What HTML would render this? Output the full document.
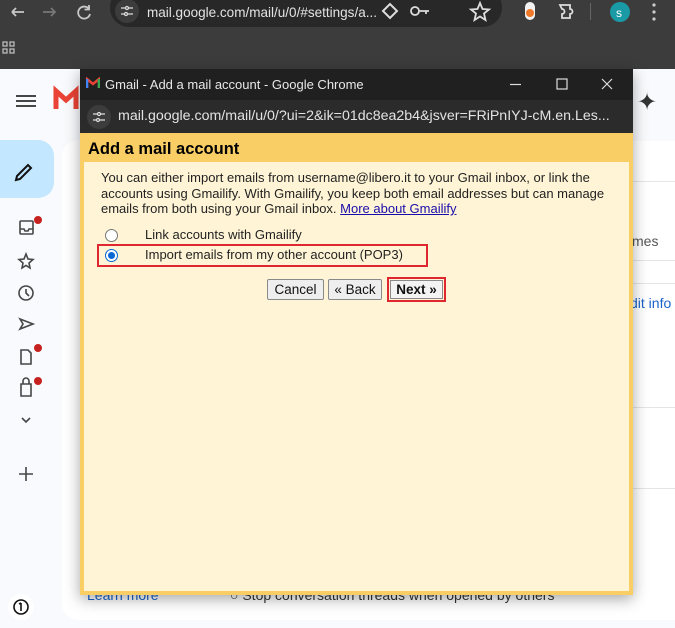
<!DOCTYPE html>
<html><head><style>
*{margin:0;padding:0;box-sizing:border-box}
body{width:675px;height:628px;overflow:hidden;background:#f8fafd;font-family:"Liberation Sans",Arial,sans-serif;position:relative}
.a{position:absolute}
</style></head><body>
<div class="a" style="left:0;top:0;width:675px;height:69px;background:#3c3c3c"></div>
<svg class="a" style="left:0;top:0" width="675" height="69">
 <g stroke="#c8c8c8" stroke-width="1.8" fill="none">
  <path d="M24 12 L12 12 M12 12 L16 8 M12 12 L16 16"/>
  <path d="M43 12 H55 M51 8 L55 12 L51 16" stroke="#777"/>
  <path d="M89 9 A6 6 0 1 0 90 14 M89 5 V9.5 H84.5"/>
 </g>
 <rect x="110" y="-12" width="392" height="39" rx="19" fill="#282828"/>
 <circle cx="127" cy="11" r="12" fill="#3c3c3c"/>
 <g stroke="#ddd" stroke-width="1.3" fill="none"><path d="M121 8 H126 M129 8 H133 M121 14 H125 M128 14 H133"/><circle cx="127" cy="8" r="1.5"/><circle cx="126" cy="14" r="1.5"/></g>
 <text x="147" y="17" fill="#e3e3e3" font-size="14" font-family="Liberation Sans" textLength="230" lengthAdjust="spacingAndGlyphs">mail.google.com/mail/u/0/#settings/a...</text>
 <path d="M383 11 L390 4 L397 11 L390 18Z" fill="none" stroke="#ddd" stroke-width="2"/>
 <g stroke="#ddd" stroke-width="1.8" fill="none"><circle cx="415" cy="11" r="4"/><path d="M419 11 H429 M426 11 V14"/>
 <path d="M480 3 L482.5 9 L489 9.5 L484 13.5 L485.5 20 L480 16.5 L474.5 20 L476 13.5 L471 9.5 L477.5 9Z"/>
 <path d="M560 5 H570 V9 A2 2 0 0 1 570 14 V18 H562 V14 A2 2 0 0 0 562 9 Z"/></g>
 <rect x="525" y="2" width="10" height="18" rx="5" fill="#f2f2f2"/><circle cx="530" cy="13" r="4" fill="#f07a2a"/>
 <rect x="590" y="3" width="1" height="17" fill="#666"/>
 <circle cx="620" cy="12" r="10" fill="#1a9aa5"/><text x="616" y="17" fill="#fff" font-size="12">s</text>
 <g fill="#ccc"><circle cx="654" cy="5" r="1.6"/><circle cx="654" cy="12" r="1.6"/><circle cx="654" cy="19" r="1.6"/></g>
 <g stroke="#bbb" stroke-width="1.3" fill="none"><rect x="3" y="42" width="4" height="4"/><rect x="10" y="42" width="4" height="4"/><rect x="3" y="49" width="4" height="4"/><rect x="10" y="49" width="4" height="4"/></g>
</svg>
<div class="a" style="left:62px;top:140px;width:640px;height:480px;background:#fff;border-radius:16px"></div>
<div class="a" style="left:0;top:140px;width:54px;height:58px;background:#c2e7ff;border-radius:0 16px 16px 0"></div>
<svg class="a" style="left:0;top:69px" width="80" height="559">
 <g stroke="#444746" stroke-width="2"><path d="M16 27 H36 M16 32 H36 M16 37 H36"/></g>
 <path d="M56 40 V22 L66 31 L76 22 V40" fill="none" stroke="#ea4335" stroke-width="5"/>
 <path d="M17 107 L28 96 L31 99 L20 110 L16 111Z" fill="none" stroke="#111" stroke-width="2"/>
 <g stroke="#444746" stroke-width="1.6" fill="none">
  <rect x="20" y="152" width="13" height="13" rx="1"/><path d="M20 160 H24 L25 162 H28 L29 160 H33"/>
  <path d="M26 185 L28 190 L33 190.5 L29 194 L30 199 L26 196.5 L22 199 L23 194 L19 190.5 L24 190Z"/>
  <circle cx="26" cy="224" r="7"/><path d="M26 220 V224 L29 227"/>
  <path d="M20 250 L33 255 L20 260 L23 255Z"/>
  <path d="M21 281 H28 L31 284 V295 H21Z"/>
  <path d="M21 315 H31 V327 H21Z M23 315 V312 A3 3 0 0 1 29 312 V315"/>
  <path d="M22 349 L26 353 L30 349"/>
  <path d="M26 398 V412 M19 405 H33"/>
 </g>
 <circle cx="38" cy="151" r="4" fill="#c5221f"/><circle cx="38" cy="279" r="4" fill="#c5221f"/><circle cx="38" cy="312" r="4" fill="#c5221f"/>
 <circle cx="21" cy="538" r="13" fill="#fff"/><circle cx="21" cy="538" r="7" fill="none" stroke="#111" stroke-width="1.6"/><path d="M21 534 V542 M19 535 L21 534" stroke="#111" stroke-width="1.6"/>
</svg>
<div class="a" style="left:632px;top:69px;width:43px;height:72px;background:#f8fafd"></div>
<div class="a" style="left:637px;top:88px;font-size:24px;color:#333">✦</div>
<div class="a" style="left:632px;top:181px;width:43px;height:1px;background:#e5e5e5"></div>
<div class="a" style="left:632px;top:260px;width:43px;height:1px;background:#e5e5e5"></div>
<div class="a" style="left:632px;top:283px;width:43px;height:1px;background:#e5e5e5"></div>
<div class="a" style="left:632px;top:407px;width:43px;height:1px;background:#e5e5e5"></div>
<div class="a" style="left:632px;top:488px;width:43px;height:1px;background:#e5e5e5"></div>
<div class="a" style="left:632px;top:233px;font-size:14px;color:#555">mes</div>
<div class="a" style="left:630px;top:295px;font-size:14px;color:#1a63c9">dit info</div>
<div class="a" style="left:87px;top:587px;font-size:14px;color:#1a63c9">Learn more</div>
<div class="a" style="left:230px;top:587px;font-size:14px;color:#333">○ Stop conversation threads when opened by others</div>
<div class="a" style="left:80px;top:69px;width:553px;height:526px;box-shadow:0 4px 14px rgba(0,0,0,.35)"></div>
<div class="a" style="left:80px;top:69px;width:553px;height:31px;background:#202020"></div>
<svg class="a" style="left:86px;top:77px" width="14" height="12"><path d="M1 11 V2 L7 7 L13 2 V11" fill="none" stroke="#ea4335" stroke-width="2.5"/><path d="M1 11 V2" stroke="#4285f4" stroke-width="2.5"/><path d="M13 11 V2" stroke="#34a853" stroke-width="2.5"/></svg>
<div class="a" style="left:105px;top:77px;font-size:13px;color:#e8e8e8">Gmail - Add a mail account - Google Chrome</div>
<svg class="a" style="left:500px;top:72px" width="130" height="25"><g stroke="#ddd" stroke-width="1.2" fill="none"><path d="M10 12.5 H21"/><rect x="57" y="7" width="10" height="10"/><path d="M102 7 L112 17 M112 7 L102 17"/></g></svg>
<div class="a" style="left:80px;top:100px;width:553px;height:33px;background:#2b2b2b"></div>
<svg class="a" style="left:86px;top:104px" width="26" height="26"><circle cx="13" cy="13" r="12" fill="#3c3c3c"/><g stroke="#ddd" stroke-width="1.2" fill="none"><path d="M7 10 H11 M15 10 H19 M7 16 H10 M14 16 H19"/><circle cx="13" cy="10" r="1.5"/><circle cx="12" cy="16" r="1.5"/></g></svg>
<div class="a" style="left:118px;top:108px;font-size:14.2px;color:#e3e3e3;white-space:nowrap">mail.google.com/mail/u/0/?ui=2&amp;ik=01dc8ea2b4&amp;jsver=FRiPnIYJ-cM.en.Les...</div>
<div class="a" style="left:80px;top:133px;width:553px;height:462px;background:#f9cf65"></div>
<div class="a" style="left:84px;top:162px;width:545px;height:429px;background:#fff5d6"></div>
<div class="a" style="left:88px;top:140px;font-size:16.5px;font-weight:bold;color:#000">Add a mail account</div>
<div class="a" style="left:101px;top:170px;width:510px;font-size:13px;line-height:15.5px;color:#222">You can either import emails from username@libero.it to your Gmail inbox, or link the accounts using Gmailify. With Gmailify, you keep both email addresses but can manage emails from both using your Gmail inbox. <span style="color:#1a0dab;text-decoration:underline">More about Gmailify</span></div>
<div class="a" style="left:105px;top:229px;width:13px;height:13px;border-radius:50%;border:1px solid #777;background:#fff"></div>
<div class="a" style="left:145px;top:227px;font-size:13px;color:#222">Link accounts with Gmailify</div>
<div class="a" style="left:97px;top:244px;width:331px;height:23px;border:2px solid #e0262e"></div>
<div class="a" style="left:105px;top:249px;width:13px;height:13px;border-radius:50%;border:1px solid #0b66d6;background:#fff"></div>
<div class="a" style="left:108px;top:252px;width:7px;height:7px;border-radius:50%;background:#0b66d6"></div>
<div class="a" style="left:145px;top:247px;font-size:13px;color:#222">Import emails from my other account (POP3)</div>
<div class="a" style="left:267px;top:279px;width:57px;height:21px;border:1px solid #8a8a8a;border-radius:2px;background:#eee;font-size:13.5px;text-align:center;line-height:19px;color:#111">Cancel</div>
<div class="a" style="left:328px;top:279px;width:54px;height:21px;border:1px solid #8a8a8a;border-radius:2px;background:#eee;font-size:13.5px;text-align:center;line-height:19px;color:#111">« Back</div>
<div class="a" style="left:387px;top:277px;width:59px;height:25px;border:2px solid #e0262e"></div>
<div class="a" style="left:390px;top:280px;width:53px;height:19px;border:1px solid #8a8a8a;background:#f3f3f3;font-size:13.5px;font-weight:bold;text-align:center;line-height:17px;color:#111">Next »</div>
</body></html>
